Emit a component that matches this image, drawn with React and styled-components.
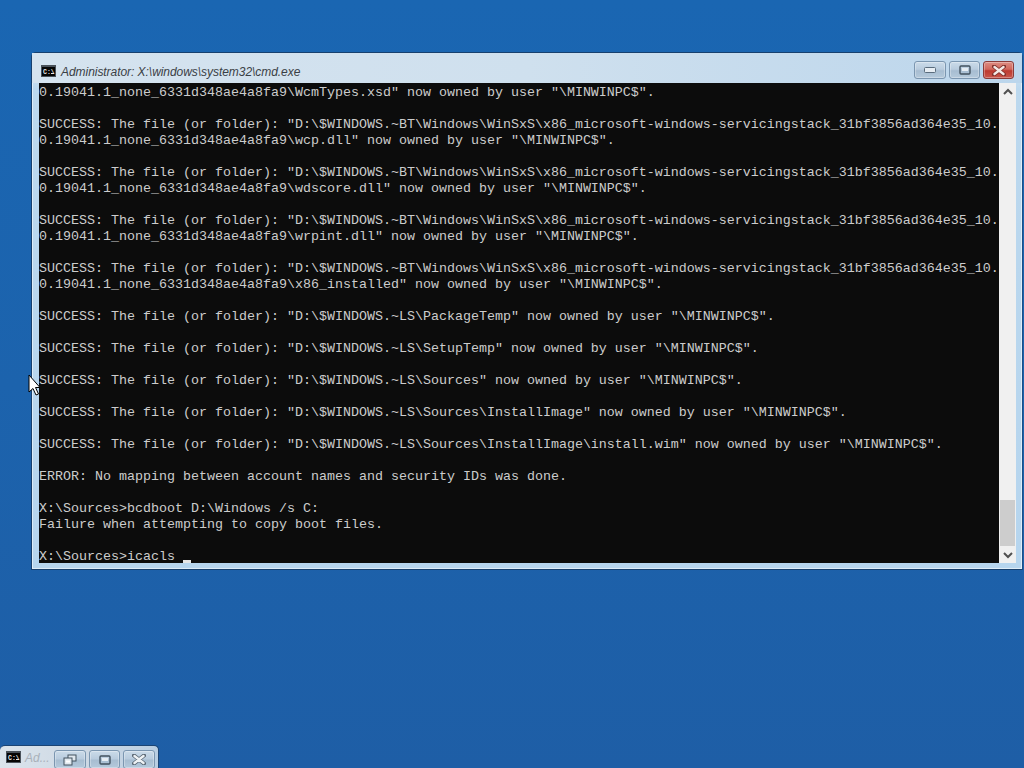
import styled, { createGlobalStyle } from "styled-components";

const GlobalStyle = createGlobalStyle`
  html, body { margin: 0; padding: 0; background: #1c62ad; overflow: hidden; }
  #root { width: 1024px; height: 768px; }
`;

const Desktop = styled.div`
  position: relative;
  width: 1024px;
  height: 768px;
  background: linear-gradient(180deg, #1a66b2 0%, #1c63ad 50%, #1e5ea6 100%);
  overflow: hidden;
  font-family: "Liberation Sans", Arial, sans-serif;
`;

const Window = styled.div`
  position: absolute;
  left: 31px;
  top: 52px;
  width: 992px;
  height: 518px;
  box-sizing: border-box;
  border: 1px solid #17406e;
  border-right-color: #1a4f88;
  border-radius: 5px 5px 0 0;
  background: linear-gradient(180deg, #e3eef7 0%, #bcd8ee 7%, #b6d5ee 100%);
  box-shadow: inset 0 0 0 1px rgba(255, 255, 255, 0.55);
  display: flex;
  flex-direction: column;
`;

const TitleBar = styled.div`
  height: 30px;
  flex: none;
  display: flex;
  align-items: center;
  padding: 6px 8px 0 9px;
  box-sizing: border-box;
  background: linear-gradient(90deg, #d5e3ef 0%, #cfe0ee 50%, #bcd6ec 100%);
`;

const Title = styled.span`
  margin: 2px 0 0 5px;
  font-size: 12px;
  font-style: italic;
  letter-spacing: -0.05px;
  color: #3a4045;
  white-space: nowrap;
`;

const TitleButtons = styled.div`
  margin-left: auto;
  display: flex;
  gap: 3px;
  margin-top: -2px;
`;

const CaptionButton = styled.div`
  width: ${(p) => p.$w}px;
  height: ${(p) => p.$h || 18}px;
  box-sizing: border-box;
  border: 1px solid ${(p) => (p.$close ? "#8a3b39" : "#7b96b0")};
  border-radius: 3px;
  display: flex;
  align-items: center;
  justify-content: center;
  background: ${(p) =>
    p.$close
      ? "linear-gradient(180deg, #dd8d83 0%, #d1675c 45%, #bd3a30 55%, #c9564b 100%)"
      : "linear-gradient(180deg, #cbdbe9 0%, #b9ccde 45%, #a7bdd1 55%, #b4c9db 100%)"};
  box-shadow: inset 0 0 0 1px rgba(255, 255, 255, 0.3);
`;

const Body = styled.div`
  flex: 1;
  display: flex;
  padding-left: 7px;
`;

const Console = styled.pre`
  width: 960px;
  height: 480px;
  margin: 0;
  background: #0c0c0c;
  color: #cccccc;
  font-family: "Liberation Mono", "DejaVu Sans Mono", monospace;
  font-size: 13.33px;
  line-height: 16px;
  overflow: hidden;
`;

const Line = styled.div`
  height: 16px;
  line-height: 19px;
  white-space: pre;
`;

const Caret = styled.span`
  display: inline-block;
  width: 8px;
  height: 3px;
  background: #e6e6e6;
  vertical-align: -3px;
`;

const Scrollbar = styled.div`
  width: 17px;
  height: 480px;
  background: #f0f0f0;
  display: flex;
  flex-direction: column;
  align-items: center;
`;

const ScrollArrow = styled.div`
  height: 16px;
  width: 100%;
  flex: none;
  display: flex;
  align-items: center;
  justify-content: center;
`;

const ScrollTrack = styled.div`
  flex: 1;
  width: 100%;
  display: flex;
  flex-direction: column;
  justify-content: flex-end;
`;

const ScrollThumb = styled.div`
  height: 46px;
  width: 15px;
  margin: 0 auto 1px;
  background: #cdcdcd;
`;

const MiniBar = styled.div`
  position: absolute;
  left: 0;
  bottom: 0;
  width: 159px;
  height: 23px;
  box-sizing: border-box;
  padding: 5px 3px 0 6px;
  border: 1px solid #1b4474;
  border-bottom: none;
  border-left: none;
  border-radius: 5px 5px 0 0;
  background: linear-gradient(90deg, #dbe4ec 0%, #cbd7e3 60%, #b9cee2 100%);
  display: flex;
  align-items: flex-start;
`;

const MiniTitle = styled.span`
  margin: 0 0 0 4px;
  font-size: 12px;
  font-style: italic;
  color: #a9b1ba;
  width: 30px;
`;

const MiniButtons = styled.div`
  display: flex;
  gap: 3px;
  margin-top: -1px;
`;

const Pointer = styled.svg`
  position: absolute;
  left: 28px;
  top: 374px;
`;

const owned = '" now owned by user "\\MINWINPC$".';
const prefix = 'SUCCESS: The file (or folder): "D:\\$WINDOWS.~BT\\Windows\\WinSxS\\x86_microsoft-windows-servicingstack_31bf3856ad364e35_10.';
const tail = "0.19041.1_none_6331d348ae4a8fa9\\";

const lines = [
  tail + "WcmTypes.xsd" + owned,
  "",
  prefix,
  tail + "wcp.dll" + owned,
  "",
  prefix,
  tail + "wdscore.dll" + owned,
  "",
  prefix,
  tail + "wrpint.dll" + owned,
  "",
  prefix,
  tail + "x86_installed" + owned,
  "",
  'SUCCESS: The file (or folder): "D:\\$WINDOWS.~LS\\PackageTemp' + owned,
  "",
  'SUCCESS: The file (or folder): "D:\\$WINDOWS.~LS\\SetupTemp' + owned,
  "",
  'SUCCESS: The file (or folder): "D:\\$WINDOWS.~LS\\Sources' + owned,
  "",
  'SUCCESS: The file (or folder): "D:\\$WINDOWS.~LS\\Sources\\InstallImage' + owned,
  "",
  'SUCCESS: The file (or folder): "D:\\$WINDOWS.~LS\\Sources\\InstallImage\\install.wim' + owned,
  "",
  "ERROR: No mapping between account names and security IDs was done.",
  "",
  "X:\\Sources>bcdboot D:\\Windows /s C:",
  "Failure when attempting to copy boot files.",
  "",
];

function CmdIcon() {
  return (
    <svg width="15" height="12" viewBox="0 0 15 12" style={{ flex: "none" }}>
      <rect x="0" y="0" width="15" height="12" fill="#4a525a" />
      <rect x="1" y="2" width="13" height="9" fill="#050505" />
      <text x="2" y="8.5" fontSize="6.5" fontWeight="700" fontFamily="Liberation Mono, monospace" fill="#e8e8e8">
        C:\
      </text>
      <rect x="10" y="8" width="3" height="1" fill="#e8e8e8" />
    </svg>
  );
}

function MinGlyph() {
  return (
    <svg width="12" height="6" viewBox="0 0 12 6">
      <rect x="0.5" y="0.5" width="11" height="5" rx="1" fill="#e6edf3" stroke="#5a6c7d" />
    </svg>
  );
}

function MaxGlyph() {
  return (
    <svg width="12" height="10" viewBox="0 0 12 10">
      <rect x="1" y="1" width="10" height="8" rx="1" fill="none" stroke="#42525f" strokeWidth="1.4" />
      <rect x="3" y="3" width="6" height="3" fill="#e6edf3" />
    </svg>
  );
}

function RestoreGlyph() {
  return (
    <svg width="14" height="12" viewBox="0 0 14 12">
      <rect x="5" y="1" width="8" height="6" fill="#dfe7ee" stroke="#42525f" />
      <rect x="1" y="4" width="8" height="7" fill="#dfe7ee" stroke="#42525f" />
      <rect x="3" y="6.5" width="4" height="2" fill="#fff" />
    </svg>
  );
}

function CloseGlyph({ color, edge }) {
  return (
    <svg width="14" height="11" viewBox="0 0 14 11">
      <path d="M2 1.5 L12 9.5 M12 1.5 L2 9.5" stroke={edge} strokeWidth="4" strokeLinecap="round" />
      <path d="M2.5 2 L11.5 9 M11.5 2 L2.5 9" stroke={color} strokeWidth="2.4" strokeLinecap="round" />
    </svg>
  );
}

function Chevron({ up }) {
  return (
    <svg width="10" height="7" viewBox="0 0 10 7">
      <path d={up ? "M1 6 L5 2 L9 6" : "M1 1 L5 5 L9 1"} fill="none" stroke="#505050" strokeWidth="2" />
    </svg>
  );
}

export default function App() {
  return (
    <Desktop>
      <GlobalStyle />
      <Window>
        <TitleBar>
          <CmdIcon />
          <Title>Administrator: X:\windows\system32\cmd.exe</Title>
          <TitleButtons>
            <CaptionButton $w={32}><MinGlyph /></CaptionButton>
            <CaptionButton $w={31}><MaxGlyph /></CaptionButton>
            <CaptionButton $w={31} $close><CloseGlyph color="#f4e9e6" edge="#7d2f2a" /></CaptionButton>
          </TitleButtons>
        </TitleBar>
        <Body>
          <Console>
            {lines.map((text, i) => (
              <Line key={i}>{text}</Line>
            ))}
            <Line>X:\Sources&gt;icacls <Caret /></Line>
          </Console>
          <Scrollbar>
            <ScrollArrow><Chevron up /></ScrollArrow>
            <ScrollTrack><ScrollThumb /></ScrollTrack>
            <ScrollArrow><Chevron /></ScrollArrow>
          </Scrollbar>
        </Body>
      </Window>
      <MiniBar>
        <CmdIcon />
        <MiniTitle>Ad...</MiniTitle>
        <MiniButtons>
          <CaptionButton $w={32} $h={19}><RestoreGlyph /></CaptionButton>
          <CaptionButton $w={31} $h={19}><MaxGlyph /></CaptionButton>
          <CaptionButton $w={32} $h={19}><CloseGlyph color="#eef2f5" edge="#5a6773" /></CaptionButton>
        </MiniButtons>
      </MiniBar>
      <Pointer width="12" height="24" viewBox="0 0 12 24">
        <path d="M1 1 L1 18 L5 14.5 L8 21 L10.5 20 L7.5 13.5 L12 13.5 Z" fill="#fff" stroke="#000" strokeWidth="1" />
      </Pointer>
    </Desktop>
  );
}
